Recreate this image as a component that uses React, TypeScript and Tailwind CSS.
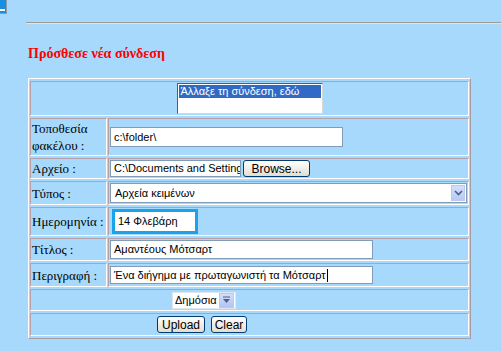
import React from 'react';

const cellBorder =
  'border border-t-[#b8a0a8] border-l-[#b8a0a8] border-b-white border-r-white p-[1px] align-middle';
const labelCls = `${cellBorder} w-[78px] font-['Liberation_Serif',serif] text-[13px] leading-[17px] text-black`;
const sans = "font-['Liberation_Sans',Arial,sans-serif]";

const Field: React.FC<{ className?: string; frame?: string; children?: React.ReactNode }> = ({
  className = '',
  frame = 'border border-[#7f9db9]',
  children,
}) => (
  <div
    className={`flex items-center overflow-hidden whitespace-nowrap bg-white px-[3px] text-[11px] text-black ${sans} ${frame} ${className}`}
  >
    {children}
  </div>
);

const XpButton: React.FC<{ className?: string; children: React.ReactNode }> = ({ className = '', children }) => (
  <div
    className={`flex items-center justify-center rounded-[3px] border border-[#003c74] bg-linear-to-b from-white to-[#e2dfcf] text-[12px] leading-none text-black ${sans} ${className}`}
  >
    {children}
  </div>
);

const ChevronBox: React.FC = () => (
  <div className="flex h-full w-[14px] items-center justify-center border border-[#b9c9ef] bg-linear-to-b from-[#d3defc] to-[#b7c9f5]">
    <svg width="9" height="6" viewBox="0 0 9 6">
      <polyline points="1,1 4.5,4.5 8,1" fill="none" stroke="#4d6185" strokeWidth="1.6" />
    </svg>
  </div>
);

const TriangleBox: React.FC = () => (
  <div className="flex h-[15px] w-[15px] shrink-0 items-center justify-center border border-[#b9c9ef] bg-linear-to-b from-[#d3defc] to-[#b2c4f2]">
    <svg width="9" height="8" viewBox="0 0 9 8">
      <line x1="1" y1="1" x2="8" y2="1" stroke="#4d6185" strokeWidth="1" />
      <polygon points="1,3 8,3 4.5,7" fill="#4d6185" />
    </svg>
  </div>
);

export default function App() {
  return (
    <div className="min-h-[351px] w-[501px] overflow-hidden bg-[#a6d9fb]">
      {/* window corner */}
      <div className="h-[14px] w-[7px] border-b border-r border-[#8a9aa8] bg-[#1a8ee0] pt-[9px]">
        <div className="h-[2px] w-[5px] bg-white" />
      </div>

      <div className="ml-[26px] mt-[8px] h-[2px] border-t border-b border-t-[#a29a92] border-b-[#d6e6ee]" />

      <h1 className="ml-[28px] mt-[22px] font-['Liberation_Serif',serif] text-[14px] font-bold leading-[16px] text-[#ff0000]">
        Πρόσθεσε νέα σύνδεση
      </h1>

      <table className="ml-[28px] mt-[16px] w-[443px] border-separate border-spacing-x-[1px] border-spacing-y-[2px] border border-t-white border-l-white border-b-[#a89ca4] border-r-[#a89ca4]">
        <tbody>
          <tr>
            <td colSpan={2} className={`${cellBorder} h-[35px]`}>
              <div className="flex justify-center">
                <div className="h-[31px] w-[146px] border border-t-[#5a5a5a] border-l-[#5a5a5a] border-b-[#d8d8d8] border-r-[#d8d8d8] bg-white p-[1px]">
                  <div className={`h-[13px] bg-[#316ac5] px-[2px] text-[11px] leading-[13px] text-white ${sans}`}>
                    Άλλαξε τη σύνδεση, εδώ
                  </div>
                </div>
              </div>
            </td>
          </tr>
          <tr>
            <td className={`${labelCls} h-[36px]`}>Τοποθεσία φακέλου :</td>
            <td className={cellBorder}>
              <Field className="h-[20px] w-[233px]">c:\folder\</Field>
            </td>
          </tr>
          <tr>
            <td className={`${labelCls} h-[21px] whitespace-nowrap`}>Αρχείο :</td>
            <td className={cellBorder}>
              <div className="flex items-center gap-[2px]">
                <Field className="h-[17px] w-[131px]">C:\Documents and Settings\</Field>
                <XpButton className="h-[17px] w-[67px]">Browse...</XpButton>
              </div>
            </td>
          </tr>
          <tr>
            <td className={`${labelCls} h-[22px] whitespace-nowrap`}>Τύπος :</td>
            <td className={cellBorder}>
              <div className={`flex h-[20px] w-[357px] items-stretch border border-[#7f9db9] bg-white p-[1px] text-[11px] text-black ${sans}`}>
                <div className="flex flex-1 items-center pl-[3px]">Αρχεία κειμένων</div>
                <ChevronBox />
              </div>
            </td>
          </tr>
          <tr>
            <td className={`${labelCls} h-[28px] whitespace-nowrap`}>Ημερομηνία :</td>
            <td className={cellBorder}>
              <Field frame="border-[3px] border-[#1aa2ea]" className="ml-[2px] h-[25px] w-[86px]">
                14 Φλεβάρη
              </Field>
            </td>
          </tr>
          <tr>
            <td className={`${labelCls} h-[23px] whitespace-nowrap`}>Τίτλος :</td>
            <td className={cellBorder}>
              <Field className="h-[19px] w-[263px]">Αμαντέους Μότσαρτ</Field>
            </td>
          </tr>
          <tr>
            <td className={`${labelCls} h-[24px] whitespace-nowrap`}>Περιγραφή :</td>
            <td className={cellBorder}>
              <Field className="h-[18px] w-[263px]">
                Ένα διήγημα με πρωταγωνιστή τα Μότσαρτ
                <span className="ml-[1px] inline-block h-[13px] w-[1px] bg-black" />
              </Field>
            </td>
          </tr>
          <tr>
            <td colSpan={2} className={`${cellBorder} h-[22px]`}>
              <div className="ml-[140px] flex h-[17px] w-[64px] items-center border border-[#dfe6f0] bg-white pl-[2px] pr-[1px]">
                <span className={`flex-1 whitespace-nowrap text-[11px] text-black ${sans}`}>Δημόσια</span>
                <TriangleBox />
              </div>
            </td>
          </tr>
          <tr>
            <td colSpan={2} className={`${cellBorder} h-[23px]`}>
              <div className="ml-[125px] flex items-center gap-[6px]">
                <XpButton className="h-[17px] w-[48px]">Upload</XpButton>
                <XpButton className="h-[17px] w-[36px]">Clear</XpButton>
              </div>
            </td>
          </tr>
        </tbody>
      </table>
    </div>
  );
}
